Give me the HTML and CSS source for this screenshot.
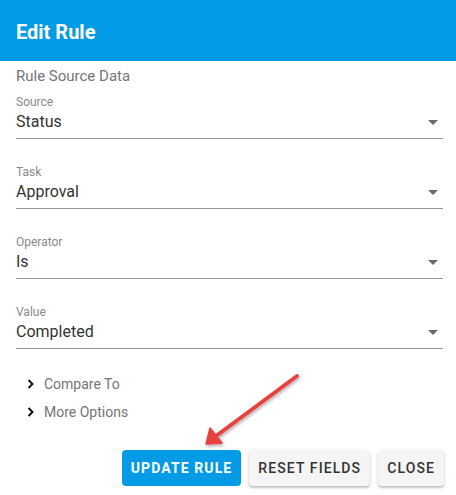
FILE: index.html
```html
<!DOCTYPE html>
<html>
<head>
<meta charset="utf-8">
<link rel="stylesheet" href="styles.css">
</head>
<body>
<div class="dialog">
  <header class="dialog-header"><h1 class="dialog-title">Edit Rule</h1></header>
  <div class="dialog-body">
    <div class="section-title">Rule Source Data</div>
    <div class="field">
      <div class="field-label">Source</div>
      <div class="field-row"><span class="field-value">Status</span><span class="caret"></span></div>
    </div>
    <div class="field">
      <div class="field-label">Task</div>
      <div class="field-row"><span class="field-value">Approval</span><span class="caret"></span></div>
    </div>
    <div class="field">
      <div class="field-label">Operator</div>
      <div class="field-row"><span class="field-value">Is</span><span class="caret"></span></div>
    </div>
    <div class="field">
      <div class="field-label">Value</div>
      <div class="field-row"><span class="field-value">Completed</span><span class="caret"></span></div>
    </div>
    <div class="expanders">
      <div class="expander">
        <svg class="chev" width="8" height="10" viewBox="0 0 8 10"><path d="M1.5 1 L5.5 5 L1.5 9" fill="none" stroke="#111" stroke-width="2"/></svg>
        <span>Compare To</span>
      </div>
      <div class="expander">
        <svg class="chev" width="8" height="10" viewBox="0 0 8 10"><path d="M1.5 1 L5.5 5 L1.5 9" fill="none" stroke="#111" stroke-width="2"/></svg>
        <span>More Options</span>
      </div>
    </div>
  </div>
  <div class="actions">
    <button class="btn btn-primary">UPDATE RULE</button>
    <button class="btn">RESET FIELDS</button>
    <button class="btn">CLOSE</button>
  </div>
  <svg class="annotation" width="456" height="495" viewBox="0 0 456 495">
    <defs>
      <filter id="sh" x="-20%" y="-20%" width="140%" height="140%">
        <feDropShadow dx="1" dy="2" stdDeviation="1.5" flood-color="#000" flood-opacity="0.3"/>
      </filter>
    </defs>
    <g filter="url(#sh)">
      <line x1="297" y1="376" x2="216" y2="436" stroke="#e8423f" stroke-width="4" stroke-linecap="round"/>
      <polygon points="206,444 210,428 222,443" fill="#e8423f" stroke="#e8423f" stroke-width="1.5" stroke-linejoin="round"/>
    </g>
  </svg>
</div>
</body>
</html>
```

FILE: styles.css
```css
* { box-sizing: border-box; }
html, body { margin: 0; padding: 0; background: #fff; }
body { font-family: Roboto, "Liberation Sans", sans-serif; }

.dialog { position: relative; width: 456px; height: 495px; background: #fff; }

.dialog-header {
  height: 61px;
  background: #039be5;
  display: flex;
  align-items: center;
  padding: 0 16px;
}
.dialog-title {
  margin: 0;
  color: #fff;
  font-size: 20px;
  font-weight: 700;
  line-height: 24px;
  padding-top: 2px;
}

.dialog-body { padding: 6px 13px 0 16px; }

.section-title {
  font-size: 15px;
  line-height: 18px;
  color: #757575;
}

.field { margin-top: 25px; border-bottom: 1px solid #949494; padding-bottom: 4px; }
.section-title + .field { margin-top: 9px; }

.field-label {
  font-size: 12px;
  line-height: 16px;
  color: #8a8a8a;
}
.field-row {
  display: flex;
  align-items: center;
  justify-content: space-between;
  height: 24px;
}
.field-value {
  font-size: 16px;
  line-height: 24px;
  color: #333;
}
.caret {
  width: 0; height: 0;
  border-left: 5px solid transparent;
  border-right: 5px solid transparent;
  border-top: 5px solid #6a6a6a;
  margin-right: 5px;
}

.expanders { margin-top: 25px; padding-left: 11px; display: flex; flex-direction: column; gap: 8px; }
.expander {
  display: flex;
  align-items: center;
  gap: 9px;
  font-size: 14px;
  line-height: 20px;
  color: #757575;
}
.chev { display: block; }

.actions {
  display: flex;
  justify-content: flex-end;
  gap: 8px;
  padding: 28px 12px 0 0;
}
.btn {
  height: 36px;
  padding: 0 9px;
  border: none;
  border-radius: 4px;
  background: #f5f5f5;
  color: #333;
  font-family: Roboto, "Liberation Sans", sans-serif;
  font-size: 14px;
  font-weight: 500;
  letter-spacing: 1.1px;
  box-shadow: 0 2px 2px rgba(0,0,0,0.18), 0 1px 4px rgba(0,0,0,0.1);
}
.btn-primary {
  background: #039be5;
  color: #fff;
  font-weight: 700;
  box-shadow: none;
}

.annotation { position: absolute; left: 0; top: 0; pointer-events: none; }
```
